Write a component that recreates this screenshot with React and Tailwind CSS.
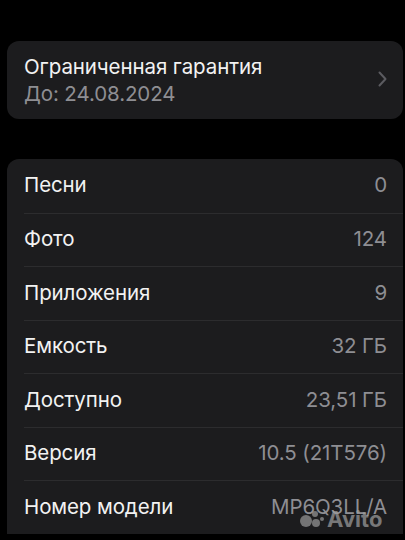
import React from 'react';

const rows = [
  ['Песни', '0'],
  ['Фото', '124'],
  ['Приложения', '9'],
  ['Емкость', '32 ГБ'],
  ['Доступно', '23,51 ГБ'],
  ['Версия', '10.5 (21T576)'],
  ['Номер модели', 'MP6Q3LL/A'],
];

function App() {
  return (
    <div className="w-[405px] h-[540px] overflow-hidden bg-black relative" style={{ fontFamily: 'Inter, "Noto Sans", sans-serif' }}>
      <div className="pt-[41px] pl-[7px] pr-[2px]">
        {/* warranty card */}
        <div className="h-[78px] rounded-[12px] bg-[#1c1c1e] flex items-center pl-[17px] pr-[16px]">
          <div className="flex-1">
            <div className="text-[20.5px] leading-[27px] text-[#f2f2f2] tracking-[-0.1px]">Ограниченная гарантия</div>
            <div className="text-[20.5px] leading-[27px] text-[#8e8e93] tracking-[-0.1px]">До: 24.08.2024</div>
          </div>
          <svg width="9" height="16" viewBox="0 0 9 16" className="mt-[-2px]">
            <path d="M1.5 1.5 L7.5 8 L1.5 14.5" fill="none" stroke="#5b5b60" strokeWidth="2" strokeLinecap="round" strokeLinejoin="round" />
          </svg>
        </div>

        {/* info card */}
        <div className="mt-[40px] rounded-t-[12px] bg-[#1c1c1e] pl-[17px]">
          {rows.map(([label, value], i) => (
            <div key={label} className={`h-[53.5px] flex items-center pr-[16px] ${i > 0 ? 'border-t border-[#2c2c2e]' : ''}`}>
              <span className="flex-1 text-[20.5px] text-[#f2f2f2] tracking-[-0.1px]">{label}</span>
              <span className="text-[20.5px] text-[#8e8e93] tracking-[-0.1px]">{value}</span>
            </div>
          ))}
        </div>
      </div>

      {/* watermark */}
      <div className="absolute left-[300px] top-[508px] flex items-center gap-[3px] opacity-70">
        <svg width="24" height="18" viewBox="0 0 24 18">
          <circle cx="6" cy="11" r="6" fill="#9a9a9a" />
          <circle cx="15" cy="4" r="3" fill="#9a9a9a" />
          <circle cx="16" cy="13" r="4" fill="#9a9a9a" />
          <circle cx="22" cy="9" r="2" fill="#9a9a9a" />
        </svg>
        <span className="text-[22px] font-bold text-[#a0a0a0] leading-none">Avito</span>
      </div>
    </div>
  );
}

export default App;
